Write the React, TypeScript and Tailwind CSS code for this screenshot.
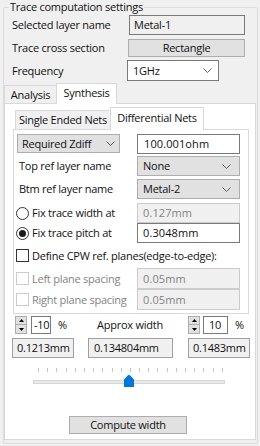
import React from "react";

const Chevron = () => (
  <svg width="9" height="5" viewBox="0 0 9 5" className="shrink-0">
    <path d="M0.5 0.5 L4.5 4.5 L8.5 0.5" fill="none" stroke="#5f5f5f" strokeWidth="1" />
  </svg>
);

const Radio = ({ checked }: { checked?: boolean }) => (
  <div className="flex h-[13px] w-[13px] shrink-0 items-center justify-center rounded-full border border-[#333333] bg-white">
    {checked && <div className="h-[7px] w-[7px] rounded-full bg-[#1a1a1a]" />}
  </div>
);

const Check = ({ disabled }: { disabled?: boolean }) => (
  <div
    className={
      disabled
        ? "h-[13px] w-[13px] shrink-0 border border-[#cccccc] bg-white"
        : "h-[13px] w-[13px] shrink-0 border border-[#333333] bg-white"
    }
  />
);

const UpDown = () => (
  <div className="flex h-[18px] w-[12px] flex-col">
    <div className="flex h-[9px] items-center justify-center border border-[#adadad] bg-[#e1e1e1]">
      <svg width="5" height="3" viewBox="0 0 5 3">
        <path d="M2.5 0 L5 3 H0 Z" fill="#000" />
      </svg>
    </div>
    <div className="-mt-[1px] flex h-[10px] items-center justify-center border border-[#adadad] bg-[#e1e1e1]">
      <svg width="5" height="3" viewBox="0 0 5 3">
        <path d="M0 0 H5 L2.5 3 Z" fill="#000" />
      </svg>
    </div>
  </div>
);

const ticks = Array.from({ length: 21 });

export default function App() {
  return (
    <div className="h-[446px] w-[260px] overflow-hidden whitespace-nowrap bg-[#f0f0f0] font-['Open_Sans',sans-serif] text-[11px] leading-[14px] tracking-[-0.25px] text-[#111111]">
      <div className="relative ml-[3px] mr-[2px] mt-[7px] h-[437px] rounded-[2px] border border-[#dcdcdc]">
        <span className="absolute -top-[8px] left-[5px] bg-[#f0f0f0] px-[1px]">Trace computation settings</span>

        {/* top settings rows */}
        <div className="pl-[8px] pt-[7px]">
          <div className="flex h-[20px] items-center">
            <span className="w-[116px]">Selected layer name</span>
            <div className="ml-[1px] flex h-[20px] w-[116px] items-center border border-[#7a7a7a] pl-[4px]">Metal-1</div>
          </div>
          <div className="mt-[4px] flex h-[18px] items-center">
            <span className="w-[116px]">Trace cross section</span>
            <div className="flex h-[18px] w-[117px] items-center justify-center border border-[#adadad] bg-[#e1e1e1]">Rectangle</div>
          </div>
          <div className="mt-[3px] flex h-[21px] items-center">
            <span className="w-[116px]">Frequency</span>
            <div className="-ml-[1px] flex h-[21px] w-[92px] items-center justify-between border border-[#7a7a7a] bg-white pl-[5px] pr-[6px]">
              <span>1GHz</span>
              <Chevron />
            </div>
          </div>
        </div>

        {/* outer tabs */}
        <div className="mr-[1px] mt-[2px]">
          <div className="flex h-[20px] items-end">
            <div className="flex h-[18px] w-[53px] items-center justify-center border border-b-0 border-[#d9d9d9] bg-[#f0f0f0]">Analysis</div>
            <div className="relative z-10 -mb-[1px] -ml-[1px] flex h-[21px] w-[61px] items-start justify-center border border-b-0 border-[#d9d9d9] bg-white pt-[2px]">
              Synthesis
            </div>
          </div>
          <div className="h-[337px] border border-[#d9d9d9] bg-white">
            {/* inner tabs */}
            <div className="ml-[8px] w-[236px] pt-[3px]">
              <div className="flex h-[22px] items-end">
                <div className="ml-[2px] flex h-[19px] w-[96px] items-center justify-center border border-b-0 border-[#d9d9d9] bg-[#f0f0f0]">
                  Single Ended Nets
                </div>
                <div className="relative z-10 -mb-[1px] -ml-[1px] flex h-[23px] w-[94px] items-start justify-center border border-b-0 border-[#d9d9d9] bg-white pt-[3px]">
                  Differential Nets
                </div>
              </div>
              <div className="h-[185px] border border-[#d9d9d9] bg-white">
                <div className="mt-[3px] flex h-[21px] items-center pl-[3px]">
                  <div className="flex h-[19px] w-[103px] items-center justify-between border border-[#adadad] bg-[#e1e1e1] pl-[4px] pr-[4px]">
                    <span>Required Zdiff</span>
                    <Chevron />
                  </div>
                  <div className="ml-[17px] flex h-[20px] w-[103px] items-center border border-[#7a7a7a] bg-white pl-[6px] tracking-[0.1px]">
                    100.001ohm
                  </div>
                </div>
                <div className="mt-[2px] flex h-[20px] items-center">
                  <span className="w-[123px] pl-[5px]">Top ref layer name</span>
                  <div className="flex h-[20px] w-[103px] items-center justify-between border border-[#adadad] bg-[#e1e1e1] pl-[5px] pr-[8px]">
                    <span>None</span>
                    <Chevron />
                  </div>
                </div>
                <div className="mt-[3px] flex h-[20px] items-center">
                  <span className="w-[123px] pl-[5px]">Btm ref layer name</span>
                  <div className="flex h-[20px] w-[103px] items-center justify-between border border-[#adadad] bg-[#e1e1e1] pl-[5px] pr-[8px]">
                    <span>Metal-2</span>
                    <Chevron />
                  </div>
                </div>
                <div className="mt-[4px] flex h-[20px] items-center">
                  <div className="flex w-[123px] items-center gap-[3px] pl-[2px]">
                    <Radio />
                    <span>Fix trace width at</span>
                  </div>
                  <div className="flex h-[20px] w-[103px] items-center border border-[#cccccc] bg-[#f0f0f0] pl-[5px] tracking-[0.1px] text-[#838383]">
                    0.127mm
                  </div>
                </div>
                <div className="flex h-[20px] items-center">
                  <div className="flex w-[123px] items-center gap-[3px] pl-[2px]">
                    <Radio checked />
                    <span>Fix trace pitch at</span>
                  </div>
                  <div className="flex h-[20px] w-[103px] items-center border border-[#7a7a7a] bg-white pl-[5px] tracking-[0.1px]">
                    0.3048mm
                  </div>
                </div>
                <div className="mt-[4px] flex h-[17px] items-center gap-[3px] pl-[2px]">
                  <Check />
                  <span>Define CPW ref. planes(edge-to-edge):</span>
                </div>
                <div className="mt-[4px] flex h-[21px] items-center">
                  <div className="flex w-[123px] items-center gap-[3px] pl-[2px] text-[#838383]">
                    <Check disabled />
                    <span>Left plane spacing</span>
                  </div>
                  <div className="flex h-[21px] w-[103px] items-center border border-[#cccccc] bg-[#f0f0f0] pl-[5px] tracking-[0.1px] text-[#838383]">
                    0.05mm
                  </div>
                </div>
                <div className="flex h-[21px] items-center">
                  <div className="flex w-[123px] items-center gap-[3px] pl-[2px] text-[#838383]">
                    <Check disabled />
                    <span>Right plane spacing</span>
                  </div>
                  <div className="flex h-[21px] w-[103px] items-center border border-[#cccccc] bg-[#f0f0f0] pl-[5px] tracking-[0.1px] text-[#838383]">
                    0.05mm
                  </div>
                </div>
              </div>
            </div>

            {/* approx width controls */}
            <div className="mt-[2px] flex h-[18px] items-center">
              <div className="flex w-[80px] items-center pl-[10px]">
                <UpDown />
                <div className="ml-[4px] flex h-[18px] w-[20px] items-center border border-[#7a7a7a] bg-white pl-[2px]">-10</div>
                <span className="ml-[7px]">%</span>
              </div>
              <div className="w-[90px] text-center">Approx width</div>
              <div className="flex items-center">
                <div className="ml-[13px]">
                  <UpDown />
                </div>
                <div className="ml-[3px] flex h-[18px] w-[25px] items-center border border-[#7a7a7a] bg-white pl-[5px]">10</div>
                <span className="ml-[7px]">%</span>
              </div>
            </div>
            <div className="mt-[4px] flex h-[20px] items-center">
              <div className="ml-[7px] flex h-[20px] w-[62px] items-center border border-[#a0a0a0] bg-[#f0f0f0] pl-[4px]">0.1213mm</div>
              <div className="ml-[14px] flex h-[20px] w-[85px] items-center border border-[#a0a0a0] bg-[#f0f0f0] pl-[5px]">0.134804mm</div>
              <div className="ml-[15px] flex h-[20px] w-[62px] items-center border border-[#a0a0a0] bg-[#f0f0f0] pl-[4px]">0.1483mm</div>
            </div>

            {/* slider */}
            <div className="ml-[33px] mt-[10px] flex h-[4px] w-[185px] justify-between">
              {ticks.map((_, i) => (
                <div key={i} className="h-[4px] w-[1px] bg-[#c4c4c4]" />
              ))}
            </div>
            <div className="relative ml-[28px] mt-[8px] h-[4px] w-[192px] border border-[#d6d6d6] bg-[#e7eaea]">
              <svg width="10" height="12" viewBox="0 0 10 12" className="absolute -top-[6px] left-[90px]">
                <path d="M5 0 Q6 0 7 1.3 L10 4.5 V12 H0 V4.5 L3 1.3 Q4 0 5 0 Z" fill="#0078d7" />
              </svg>
            </div>

            <div className="ml-[64px] mt-[32px] flex h-[18px] w-[118px] items-center justify-center border border-[#adadad] bg-[#e1e1e1]">
              Compute width
            </div>
          </div>
        </div>
      </div>
    </div>
  );
}
